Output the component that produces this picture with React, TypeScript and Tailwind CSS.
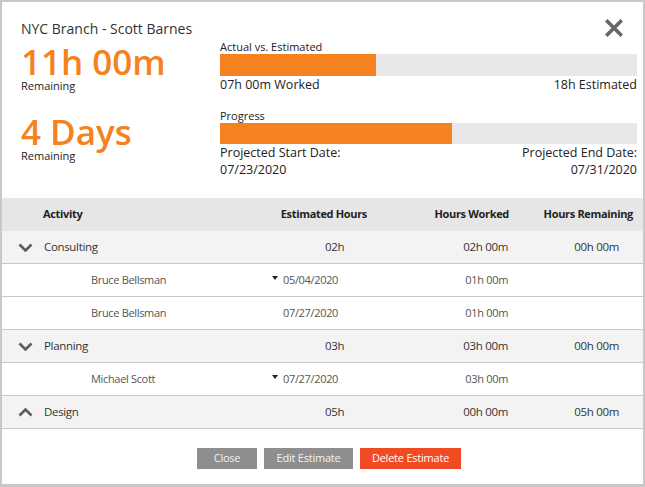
import React from 'react';

const font = { fontFamily: '"Open Sans", "Liberation Sans", sans-serif' };

const Chevron = ({ up = false }: { up?: boolean }) => (
  <svg width="15" height="9" viewBox="0 0 15 9" className="shrink-0">
    <polyline
      points={up ? '1.5,7.5 7.5,1.5 13.5,7.5' : '1.5,1.5 7.5,7.5 13.5,1.5'}
      fill="none"
      stroke="#5c5c5c"
      strokeWidth="2.6"
    />
  </svg>
);

const Caret = () => (
  <svg width="6" height="4" viewBox="0 0 6 4" className="shrink-0">
    <polygon points="0,0 6,0 3,4" fill="#222" />
  </svg>
);

type Row =
  | { kind: 'group'; name: string; est: string; worked: string; remaining: string; open: boolean }
  | { kind: 'item'; name: string; date: string; caret: boolean; worked: string };

const App = () => {
  const rows: Row[] = [
    { kind: 'group', name: 'Consulting', est: '02h', worked: '02h 00m', remaining: '00h 00m', open: true },
    { kind: 'item', name: 'Bruce Bellsman', date: '05/04/2020', caret: true, worked: '01h 00m' },
    { kind: 'item', name: 'Bruce Bellsman', date: '07/27/2020', caret: false, worked: '01h 00m' },
    { kind: 'group', name: 'Planning', est: '03h', worked: '03h 00m', remaining: '00h 00m', open: true },
    { kind: 'item', name: 'Michael Scott', date: '07/27/2020', caret: true, worked: '03h 00m' },
    { kind: 'group', name: 'Design', est: '05h', worked: '00h 00m', remaining: '05h 00m', open: false }
  ];

  return (
    <div
      style={font}
      className="w-[645px] h-[487px] bg-white border-2 border-b-[3px] border-[#c8c8c8] flex flex-col text-[#222]"
    >
      {/* Summary */}
      <div className="h-[196px] flex pt-[17px] pl-[19px] pr-[6px] relative">
        <div className="w-[199px] flex flex-col">
          <div className="text-[14px] leading-[20px] text-[#333]">NYC Branch - Scott Barnes</div>
          <div className="mt-[5px] text-[35px] leading-[35px] font-semibold text-[#f5821f]">11h 00m</div>
          <div className="text-[11px] leading-[14px]">Remaining</div>
          <div className="mt-[21px] text-[35px] leading-[35px] font-semibold text-[#f5821f]">4 Days</div>
          <div className="text-[11px] leading-[14px]">Remaining</div>
        </div>

        <div className="flex-1 flex flex-col mt-[20px]">
          <div className="text-[11px] leading-[15px]">Actual vs. Estimated</div>
          <div className="h-[22px] bg-[#e8e8e8]">
            <div className="h-full w-[37.5%] bg-[#f5821f]" />
          </div>
          <div className="flex justify-between text-[12.5px] leading-[17px]">
            <span>07h 00m Worked</span>
            <span>18h Estimated</span>
          </div>

          <div className="mt-[16px] text-[11px] leading-[14px]">Progress</div>
          <div className="h-[21px] bg-[#e8e8e8]">
            <div className="h-full w-[55.7%] bg-[#f5821f]" />
          </div>
          <div className="flex justify-between text-[12.5px] leading-[17px]">
            <div>
              <div>Projected Start Date:</div>
              <div>07/23/2020</div>
            </div>
            <div className="text-right">
              <div>Projected End Date:</div>
              <div>07/31/2020</div>
            </div>
          </div>
        </div>

        <button className="absolute right-[20px] top-[17px] w-[18px] h-[18px]">
          <svg width="18" height="18" viewBox="0 0 18 18">
            <path d="M2.5 2.5 L15.5 15.5 M15.5 2.5 L2.5 15.5" stroke="#666" strokeWidth="3.6" strokeLinecap="square" />
          </svg>
        </button>
      </div>

      {/* Table */}
      <div className="text-[11px] tracking-[-0.03em]">
        <div className="h-[33px] flex items-center bg-[#e6e6e6] font-bold text-[#222]">
          <div className="w-[261px] pl-[41px]">Activity</div>
          <div className="w-[104px] text-right">Estimated Hours</div>
          <div className="w-[142px] text-right">Hours Worked</div>
          <div className="w-[124px] text-right">Hours Remaining</div>
        </div>

        {rows.map((r, i) =>
          r.kind === 'group' ? (
            <div key={i} className="h-[33px] flex items-center bg-[#f3f3f3] border-b border-[#c8c8c8] text-[11.5px] text-[#333]">
              <div className="w-[261px] pl-[16px] flex items-center gap-[11px]">
                <Chevron up={!r.open} />
                <span>{r.name}</span>
              </div>
              <div className="w-[104px] pl-[62px]">{r.est}</div>
              <div className="w-[142px] text-right pr-[1px]">{r.worked}</div>
              <div className="w-[124px] text-right pr-[14px]">{r.remaining}</div>
            </div>
          ) : (
            <div key={i} className="h-[33px] flex items-center bg-white border-b border-[#c8c8c8] text-[#555]">
              <div className="w-[261px] pl-[89px]">{r.name}</div>
              <div className="w-[104px] pl-[9px] flex items-center">
                <span className="w-[11px] flex items-start -mt-[4px]">{r.caret && <Caret />}</span>
                <span>{r.date}</span>
              </div>
              <div className="w-[142px] text-right pr-[1px]">{r.worked}</div>
              <div className="w-[124px]" />
            </div>
          )
        )}
      </div>

      {/* Actions */}
      <div className="flex justify-center gap-[7px] mt-[19px] pl-[13px] text-[11px] tracking-[-0.02em]">
        <button className="w-[60px] h-[21px] bg-[#8e8e8e] text-[#f2f2f2]">Close</button>
        <button className="w-[89px] h-[21px] bg-[#8e8e8e] text-[#f2f2f2]">Edit Estimate</button>
        <button className="w-[101px] h-[21px] bg-[#f04b22] text-white">Delete Estimate</button>
      </div>
    </div>
  );
};

export default App;
